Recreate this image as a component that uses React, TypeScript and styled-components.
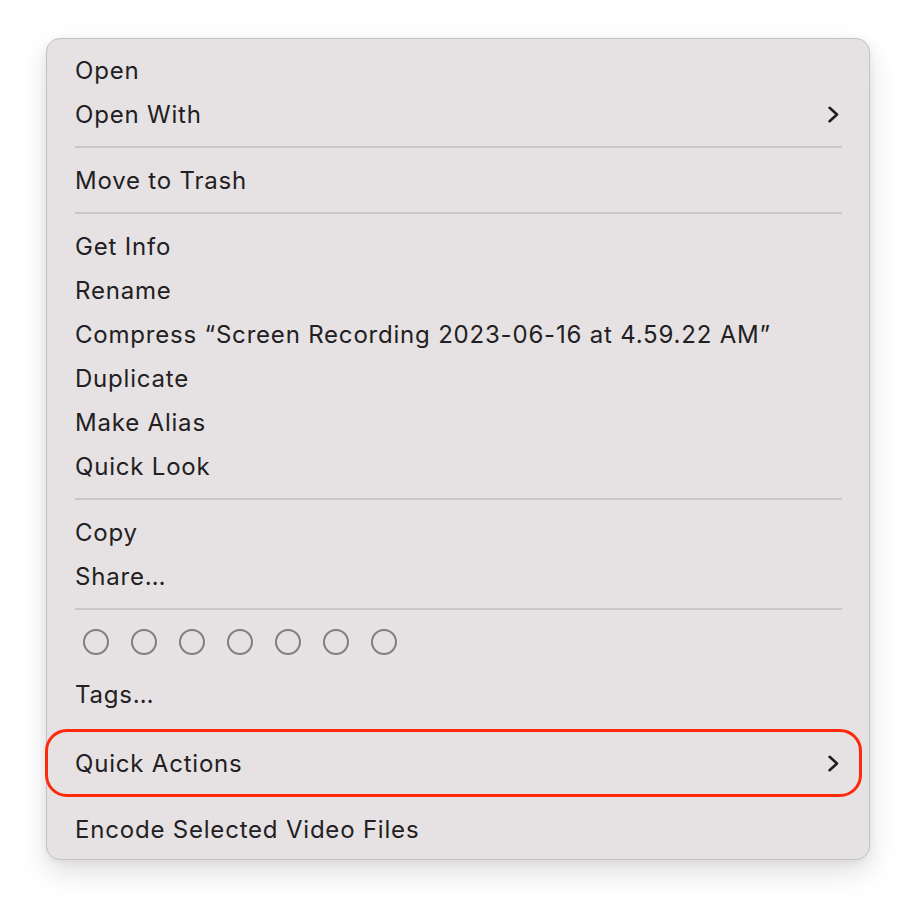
import React from "react";
import styled, { createGlobalStyle } from "styled-components";

type Entry =
  | { kind: "item"; label: string; submenu?: boolean }
  | { kind: "sep" }
  | { kind: "tags" };

const entries: Entry[] = [
  { kind: "item", label: "Open" },
  { kind: "item", label: "Open With", submenu: true },
  { kind: "sep" },
  { kind: "item", label: "Move to Trash" },
  { kind: "sep" },
  { kind: "item", label: "Get Info" },
  { kind: "item", label: "Rename" },
  { kind: "item", label: "Compress “Screen Recording 2023-06-16 at 4.59.22 AM”" },
  { kind: "item", label: "Duplicate" },
  { kind: "item", label: "Make Alias" },
  { kind: "item", label: "Quick Look" },
  { kind: "sep" },
  { kind: "item", label: "Copy" },
  { kind: "item", label: "Share…" },
  { kind: "sep" },
  { kind: "tags" },
  { kind: "sep" },
  { kind: "item", label: "Quick Actions", submenu: true },
  { kind: "sep" },
  { kind: "item", label: "Encode Selected Video Files" },
];

const Chevron = () => (
  <svg width="13" height="17" viewBox="0 0 13 17" fill="none">
    <path
      d="M2.6 1.8 L10 8.5 L2.6 15.2"
      stroke="#1f1d1f"
      strokeWidth="2.6"
      strokeLinecap="round"
      strokeLinejoin="round"
    />
  </svg>
);

const App: React.FC = () => {
  return (
    <>
      <GlobalStyle />
      <Page>
        <Menu>
          {entries.map((e, i) => {
            if (e.kind === "sep") return <Separator key={i} />;
            if (e.kind === "tags")
              return (
                <React.Fragment key={i}>
                  <TagRow>
                    {Array.from({ length: 7 }).map((_, j) => (
                      <TagDot key={j} />
                    ))}
                  </TagRow>
                  <TagsItem>Tags…</TagsItem>
                </React.Fragment>
              );
            return (
              <Item key={i}>
                <span>{e.label}</span>
                {e.submenu && <Chevron />}
              </Item>
            );
          })}
          <Highlight />
        </Menu>
      </Page>
    </>
  );
};

export default App;

const GlobalStyle = createGlobalStyle`
  html, body {
    margin: 0;
    padding: 0;
    background: #ffffff;
  }
  body {
    font-family: Inter, "Noto Sans", "Liberation Sans", sans-serif;
    -webkit-font-smoothing: antialiased;
  }
`;

const Page = styled.div`
  width: 916px;
  height: 914px;
  padding: 38px 0 0 46px;
  box-sizing: border-box;
`;

const Menu = styled.div`
  position: relative;
  width: 824px;
  height: 822px;
  box-sizing: border-box;
  background: #e6e2e3;
  border: 1px solid #c4c1c2;
  border-radius: 14px;
  padding: 9px 0 8px 0;
  box-shadow: 0 12px 28px rgba(0, 0, 0, 0.13), 0 2px 8px rgba(0, 0, 0, 0.06);
`;

const Item = styled.div`
  height: 44px;
  display: flex;
  align-items: center;
  justify-content: space-between;
  padding: 0 29px 0 28px;
  font-size: 24px;
  color: #222022;
  letter-spacing: 0.8px;
  white-space: nowrap;
`;

const TagsItem = styled(Item)`
  margin-bottom: 3px;
`;

const Separator = styled.div`
  height: 22px;
  display: flex;
  align-items: center;
  padding: 0 27px 0 28px;

  &::after {
    content: "";
    flex: 1;
    height: 2px;
    background: #cbc7c8;
  }
`;

const TagRow = styled.div`
  height: 52px;
  display: flex;
  align-items: flex-start;
  gap: 22px;
  padding: 9px 0 0 36px;
  box-sizing: border-box;
`;

const TagDot = styled.div`
  width: 26px;
  height: 26px;
  border-radius: 50%;
  border: 2px solid #807e80;
  box-sizing: border-box;
`;

const Highlight = styled.div`
  position: absolute;
  left: -2px;
  top: 690px;
  width: 817px;
  height: 68px;
  box-sizing: border-box;
  border: 3px solid #fb2a0c;
  border-radius: 22px;
  pointer-events: none;
`;
